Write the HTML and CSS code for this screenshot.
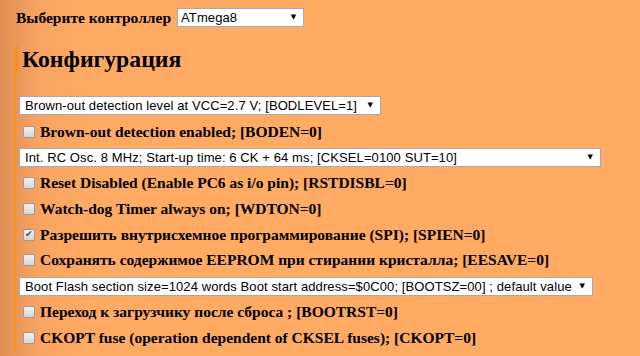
FILE: index.html
```html
<!DOCTYPE html>
<html lang="ru">
<head>
    <meta charset="UTF-8">
    <meta name="viewport" content="width=device-width, initial-scale=1.0">
    <title>AVR Fuse Calculator</title>
    <link rel="stylesheet" href="styles.css">
</head>
<body>
    <div class="chip-row">
        <label for="chip" class="chip-label">Выберите контроллер</label>
        <span class="pick">
            <select id="chip" class="chip-select">
                <option selected>ATmega8</option>
                <option>ATmega16</option>
                <option>ATmega32</option>
                <option>ATmega328P</option>
            </select>
        </span>
    </div>

    <div class="config">
        <h2>Конфигурация</h2>

        <div class="row">
            <span class="pick">
                <select class="fuse-select w-bod">
                    <option selected>Brown-out detection level at VCC=2.7 V; [BODLEVEL=1]</option>
                    <option>Brown-out detection level at VCC=4.0 V; [BODLEVEL=0]</option>
                </select>
            </span>
        </div>
        <label class="row">
            <input type="checkbox" class="fuse-check">
            <span>Brown-out detection enabled; [BODEN=0]</span>
        </label>
        <div class="row">
            <span class="pick">
                <select class="fuse-select w-clk">
                    <option selected>Int. RC Osc. 8 MHz; Start-up time: 6 CK + 64 ms; [CKSEL=0100 SUT=10]</option>
                    <option>Int. RC Osc. 1 MHz; Start-up time: 6 CK + 64 ms; [CKSEL=0001 SUT=10]</option>
                    <option>Ext. Crystal/Resonator High Freq.; Start-up time: 16K CK + 64 ms; [CKSEL=1111 SUT=11]</option>
                </select>
            </span>
        </div>
        <label class="row">
            <input type="checkbox" class="fuse-check">
            <span>Reset Disabled (Enable PC6 as i/o pin); [RSTDISBL=0]</span>
        </label>
        <label class="row">
            <input type="checkbox" class="fuse-check">
            <span>Watch-dog Timer always on; [WDTON=0]</span>
        </label>
        <label class="row">
            <input type="checkbox" class="fuse-check" checked>
            <span>Разрешить внутрисхемное программирование (SPI); [SPIEN=0]</span>
        </label>
        <label class="row">
            <input type="checkbox" class="fuse-check">
            <span>Сохранять содержимое EEPROM при стирании кристалла; [EESAVE=0]</span>
        </label>
        <div class="row">
            <span class="pick">
                <select class="fuse-select w-boot">
                    <option selected>Boot Flash section size=1024 words Boot start address=$0C00; [BOOTSZ=00] ; default value</option>
                    <option>Boot Flash section size=512 words Boot start address=$0E00; [BOOTSZ=01]</option>
                    <option>Boot Flash section size=256 words Boot start address=$0F00; [BOOTSZ=10]</option>
                    <option>Boot Flash section size=128 words Boot start address=$0F80; [BOOTSZ=11]</option>
                </select>
            </span>
        </div>
        <label class="row">
            <input type="checkbox" class="fuse-check">
            <span>Переход к загрузчику после сброса ; [BOOTRST=0]</span>
        </label>
        <label class="row">
            <input type="checkbox" class="fuse-check">
            <span>CKOPT fuse (operation dependent of CKSEL fuses); [CKOPT=0]</span>
        </label>
    </div>
</body>
</html>
```

FILE: styles.css
```css
body {
    margin: 8px 0 0 14px;
    font-family: "Liberation Serif", "Times New Roman", serif;
    color: #000;
    background: linear-gradient(to right, #df8e55 0, #f9a461 40px, #ffab63 90px) #ffab63;
    min-height: 340px;
}
.chip-row {
    display: flex;
    align-items: center;
    height: 19px;
    padding-left: 2px;
}
.chip-label {
    font-size: 15.5px;
    font-weight: bold;
    margin-right: 6px;
}
.pick {
    position: relative;
    display: inline-block;
}
.pick::after {
    content: "\25BC";
    position: absolute;
    right: 8px;
    top: 5px;
    font-family: "DejaVu Sans", sans-serif;
    font-size: 7px;
    line-height: 8px;
    color: #000;
    pointer-events: none;
}
select {
    appearance: none;
    -webkit-appearance: none;
    box-sizing: border-box;
    height: 19px;
    margin: 0;
    padding: 0 12px 0 5px;
    font-family: "Liberation Sans", Arial, sans-serif;
    font-size: 13px;
    letter-spacing: 0.1px;
    color: #000;
    background: #fff;
    border: 1px solid #a9a9a9;
    border-radius: 0;
}
.chip-select {
    width: 127px;
    padding-left: 3px;
}
.config {
    margin-top: 19px;
    border-left: 2px solid #f7921e;
}
h2 {
    margin: 0 0 20px -2px;
    padding-left: 4px;
    border-left: 4px solid #f7921e;
    font-size: 23.7px;
    line-height: 27px;
}
.row {
    display: flex;
    align-items: center;
    height: 25.75px;
    padding-left: 3px;
    font-size: 15.5px;
    font-weight: bold;
    white-space: nowrap;
}
.w-bod {
    width: 362px;
}
.w-clk {
    width: 582px;
}
.w-boot {
    width: 574px;
}
.fuse-check {
    appearance: none;
    -webkit-appearance: none;
    position: relative;
    box-sizing: border-box;
    width: 12px;
    height: 12px;
    margin: 0 5px 0 4px;
    border: 1px solid #9c9c9c;
    border-radius: 2px;
    background: linear-gradient(#f2f2f2, #d6d6d6);
}
.fuse-check:checked::after {
    content: "\2714";
    position: absolute;
    left: 1px;
    top: -1px;
    font-family: "DejaVu Sans", sans-serif;
    font-size: 9px;
    line-height: 11px;
    color: #4a4a4a;
}
```
